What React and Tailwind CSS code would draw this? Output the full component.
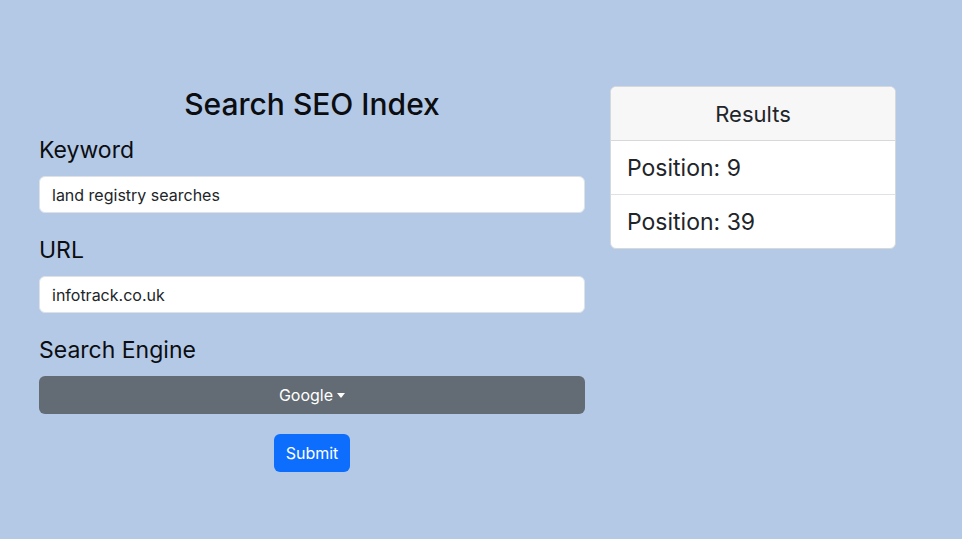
export default function App() {
  return (
    <div className="min-h-[539px] w-full bg-[#b4c9e6] font-['Inter',sans-serif] text-[#212529]">
      <div className="flex gap-[25px] pl-[39px] pt-[86px]">
        {/* Search form */}
        <div className="w-[546px]">
          <h2 className="mb-[14px] text-center text-[30px] font-medium leading-[36px] text-[#0b0d10]">Search SEO Index</h2>

          <label className="mb-[12px] block text-[23px] font-normal leading-[28px] text-[#0b0d10]">Keyword</label>
          <input
            className="mb-[23px] block h-[37px] w-full rounded-[6px] border border-[#dee2e6] bg-white px-[12px] text-[16px] outline-none"
            defaultValue="land registry searches"
          />

          <label className="mb-[12px] block text-[23px] font-normal leading-[28px] text-[#0b0d10]">URL</label>
          <input
            className="mb-[23px] block h-[37px] w-full rounded-[6px] border border-[#dee2e6] bg-white px-[12px] text-[16px] outline-none"
            defaultValue="infotrack.co.uk"
          />

          <label className="mb-[12px] block text-[23px] font-normal leading-[28px] text-[#0b0d10]">Search Engine</label>
          <button className="mb-[20px] flex h-[38px] w-full items-center justify-center gap-[4px] rounded-[6px] bg-[#636b74] text-[16px] text-white">
            Google
            <span className="mt-[1px] border-x-[4px] border-t-[5px] border-x-transparent border-t-white" />
          </button>

          <div className="flex justify-center">
            <button className="h-[38px] rounded-[6px] bg-[#0d6efd] px-[12px] text-[16px] text-white">Submit</button>
          </div>
        </div>

        {/* Results card */}
        <div className="h-fit w-[286px] rounded-[6px] border border-[#d6d9dc] bg-white">
          <div className="flex h-[54px] items-center justify-center rounded-t-[6px] border-b border-[#d6d9dc] bg-[#f7f7f7] text-[22px] leading-[26px]">
            Results
          </div>
          <ul className="rounded-[6px]">
            <li className="flex h-[54px] items-center border-b border-[#dee2e6] px-[16px] pt-[2px] text-[23px]">Position: 9</li>
            <li className="flex h-[53px] items-center px-[16px] pt-[2px] text-[23px]">Position: 39</li>
          </ul>
        </div>
      </div>
    </div>
  );
}
